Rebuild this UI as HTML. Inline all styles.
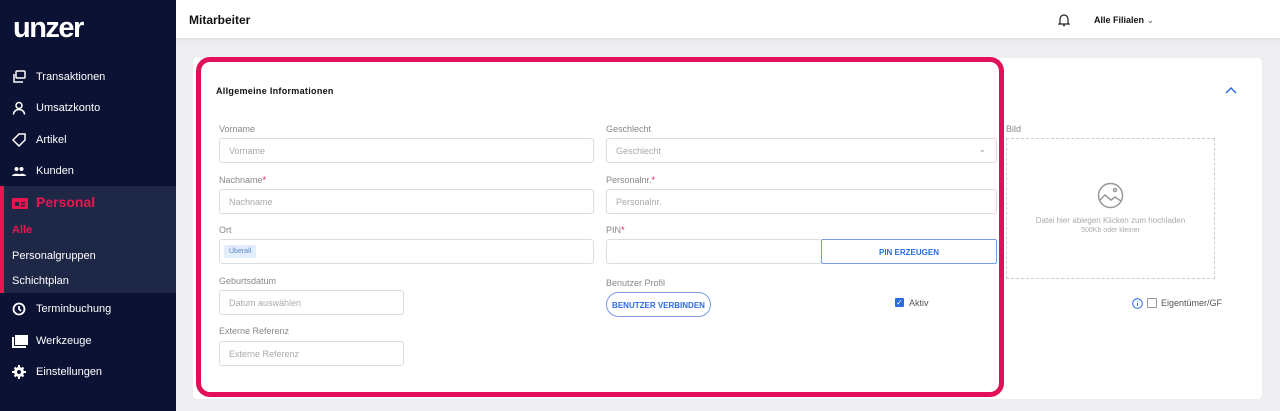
<!DOCTYPE html>
<html><head><meta charset="utf-8"><style>
*{box-sizing:border-box;margin:0;padding:0}
body{width:1280px;height:411px;overflow:hidden;background:#eeeef1;font-family:"Liberation Sans",sans-serif;position:relative}
.sb{position:absolute;left:0;top:0;width:176px;height:411px;background:#0c1233;color:#fff}
.logo{position:absolute;left:13px;top:12px;font-size:29px;font-weight:bold;letter-spacing:-1.5px;color:#fff}
.it{position:absolute;left:36px;font-size:11px;color:#fff}
.ic{position:absolute;left:12px;width:14px;height:14px}
.act{position:absolute;left:0;top:186px;width:176px;height:107px;background:#1f2747;border-left:4px solid #e8154f}
.hd{position:absolute;left:176px;top:0;width:1104px;height:38px;background:#fff;box-shadow:0 1px 4px rgba(0,0,0,.08)}
.card{position:absolute;left:193px;top:58px;width:1069px;height:341px;background:#fff;border-radius:4px}
.frame{position:absolute;left:196px;top:57px;width:808px;height:340px;border:5px solid #e2105a;border-radius:14px}
.lbl{position:absolute;font-size:9px;color:#888}
.lbl b{color:#e2105a;font-weight:normal}
.inp{position:absolute;height:25px;border:1px solid #dcdcdc;border-radius:3px;font-size:9px;color:#aaa;padding:7px 9px;background:#fff}
.btn{position:absolute;font-size:8px;font-weight:bold;color:#2d6cdf;text-align:center}
</style></head><body>
<div class="sb">
<div class="logo">unzer</div>
<svg class="ic" style="top:70px" viewBox="0 0 14 14" fill="none" stroke="#fff" stroke-width="1.5"><rect x="4" y="1" width="9" height="7" rx="1"/><path d="M2 4v8h9"/></svg>
<div class="it" style="top:71px">Transaktionen</div>
<svg class="ic" style="top:101px" viewBox="0 0 14 14" fill="none" stroke="#fff" stroke-width="1.5"><circle cx="7" cy="4.5" r="3"/><path d="M1.5 13.5c0-3 2.5-5 5.5-5s5.5 2 5.5 5"/></svg>
<div class="it" style="top:102px">Umsatzkonto</div>
<svg class="ic" style="top:133px" viewBox="0 0 14 14" fill="none" stroke="#fff" stroke-width="1.5"><path d="M1 7l6-6h6v6l-6 6z"/></svg>
<div class="it" style="top:134px">Artikel</div>
<svg class="ic" style="top:164px" viewBox="0 0 14 14" fill="#fff"><circle cx="4.5" cy="5" r="2"/><circle cx="9.5" cy="5" r="2"/><path d="M0 12c0-3 9-3 9 0zM6 12c0-3 8-3 8 0z"/></svg>
<div class="it" style="top:165px">Kunden</div>
<div class="act"></div>
<svg class="ic" style="top:196px;width:16px" viewBox="0 0 16 14" fill="#e8154f"><rect x="0" y="2" width="16" height="11" rx="1"/><rect x="3" y="6" width="4" height="4" fill="#1f2747"/><rect x="9" y="6" width="4" height="1.5" fill="#1f2747"/><rect x="9" y="9" width="4" height="1.5" fill="#1f2747"/></svg>
<div class="it" style="top:194px;font-size:14px;font-weight:bold;color:#e8154f">Personal</div>
<div class="it" style="top:224px;left:12px;font-weight:bold;color:#e8154f">Alle</div>
<div class="it" style="top:250px;left:12px">Personalgruppen</div>
<div class="it" style="top:275px;left:12px">Schichtplan</div>
<svg class="ic" style="top:302px" viewBox="0 0 14 14" fill="none" stroke="#fff" stroke-width="1.8"><circle cx="7" cy="7" r="5.5"/><path d="M7 4v3l2 2"/></svg>
<div class="it" style="top:303px">Terminbuchung</div>
<svg class="ic" style="top:334px;width:16px" viewBox="0 0 16 14" fill="#fff"><rect x="3" y="1" width="13" height="10"/><path d="M0 3h2v9h12v2H0z"/></svg>
<div class="it" style="top:335px">Werkzeuge</div>
<svg class="ic" style="top:365px" viewBox="0 0 14 14" fill="#fff"><circle cx="7" cy="7" r="5"/><path d="M6 0h2v14H6zM0 6h14v2H0zM1.8 3.2l1.4-1.4 9 9-1.4 1.4zM10.8 1.8l1.4 1.4-9 9-1.4-1.4z"/><circle cx="7" cy="7" r="2" fill="#0c1233"/></svg>
<div class="it" style="top:366px">Einstellungen</div>
</div>
<div class="hd">
<div style="position:absolute;left:13px;top:13px;font-size:12px;font-weight:bold;color:#111">Mitarbeiter</div>
<svg style="position:absolute;left:882px;top:13px" width="12" height="14" viewBox="0 0 12 14" fill="none" stroke="#222" stroke-width="1.2"><path d="M2 10V6a4 4 0 0 1 8 0v4l1 1H1z M5 12.5h2"/></svg>
<div style="position:absolute;left:918px;top:15px;font-size:9px;font-weight:bold;color:#111">Alle Filialen <span style="font-weight:normal;color:#555">&#8964;</span></div>
</div>
<div class="card"></div>
<div class="frame"></div>
<div style="position:absolute;left:216px;top:86px;font-size:9px;font-weight:bold;color:#111;letter-spacing:.3px">Allgemeine Informationen</div>
<svg style="position:absolute;left:1225px;top:86px" width="12" height="8" viewBox="0 0 12 8" fill="none" stroke="#2d6cdf" stroke-width="1.5"><path d="M1 7l5-5 5 5"/></svg>
<div class="lbl" style="left:219px;top:124px">Vorname</div>
<div class="inp" style="left:219px;top:138px;width:375px">Vorname</div>
<div class="lbl" style="left:219px;top:175px">Nachname<b>*</b></div>
<div class="inp" style="left:219px;top:189px;width:375px">Nachname</div>
<div class="lbl" style="left:219px;top:225px">Ort</div>
<div class="inp" style="left:219px;top:239px;width:375px;padding:5px 4px"><div style="display:inline-block;background:#e3eefc;color:#5a86c8;font-size:7px;line-height:13px;padding:0 5px;border-radius:2px">Überall</div></div>
<div class="lbl" style="left:219px;top:276px">Geburtsdatum</div>
<div class="inp" style="left:219px;top:290px;width:185px">Datum auswählen</div>
<div class="lbl" style="left:219px;top:326px">Externe Referenz</div>
<div class="inp" style="left:219px;top:341px;width:185px">Externe Referenz</div>
<div class="lbl" style="left:606px;top:124px">Geschlecht</div>
<div class="inp" style="left:606px;top:138px;width:391px">Geschlecht<span style="position:absolute;right:10px;top:5px;color:#999">&#8964;</span></div>
<div class="lbl" style="left:606px;top:175px">Personalnr.<b>*</b></div>
<div class="inp" style="left:606px;top:189px;width:391px">Personalnr.</div>
<div class="lbl" style="left:606px;top:225px">PIN<b>*</b></div>
<div class="inp" style="left:606px;top:239px;width:216px"></div>
<div class="btn" style="left:821px;top:239px;width:176px;height:25px;border:1px solid #7a9be0;border-radius:2px;padding-top:8px">PIN ERZEUGEN</div>
<div class="lbl" style="left:606px;top:278px">Benutzer Profil</div>
<div class="btn" style="left:606px;top:292px;width:105px;height:25px;border:1px solid #7a9be0;border-radius:13px;padding-top:8px">BENUTZER VERBINDEN</div>
<div style="position:absolute;left:895px;top:298px;width:9px;height:9px;background:#2d6cdf;border-radius:1px;color:#fff;font-size:8px;line-height:9px;text-align:center">&#10003;</div>
<div class="lbl" style="left:909px;top:298px;color:#555">Aktiv</div>
<div class="lbl" style="left:1006px;top:124px">Bild</div>
<div style="position:absolute;left:1006px;top:138px;width:209px;height:141px;border:1px dashed #ccc"></div>
<svg style="position:absolute;left:1097px;top:182px" width="27" height="27" viewBox="0 0 27 27" fill="none" stroke="#999" stroke-width="1.5"><circle cx="13.5" cy="13.5" r="12"/><path d="M3 18l5-5 6 5 4-3 6 4"/><circle cx="18" cy="8" r="1.5"/></svg>
<div style="position:absolute;left:1006px;top:216px;width:209px;text-align:center;font-size:8px;color:#aaa">Datei hier ablegen Klicken zum hochladen</div>
<div style="position:absolute;left:1006px;top:227px;width:209px;text-align:center;font-size:7px;color:#aaa">500Kb oder kleiner</div>
<svg style="position:absolute;left:1132px;top:298px" width="11" height="11" viewBox="0 0 11 11" fill="none" stroke="#2d6cdf"><circle cx="5.5" cy="5.5" r="4.8"/><path d="M5.5 5v3M5.5 3v.8"/></svg>
<div style="position:absolute;left:1147px;top:298px;width:10px;height:10px;border:1px solid #999;border-radius:1px"></div>
<div class="lbl" style="left:1161px;top:298px;color:#555">Eigentümer/GF</div>
</body></html>
